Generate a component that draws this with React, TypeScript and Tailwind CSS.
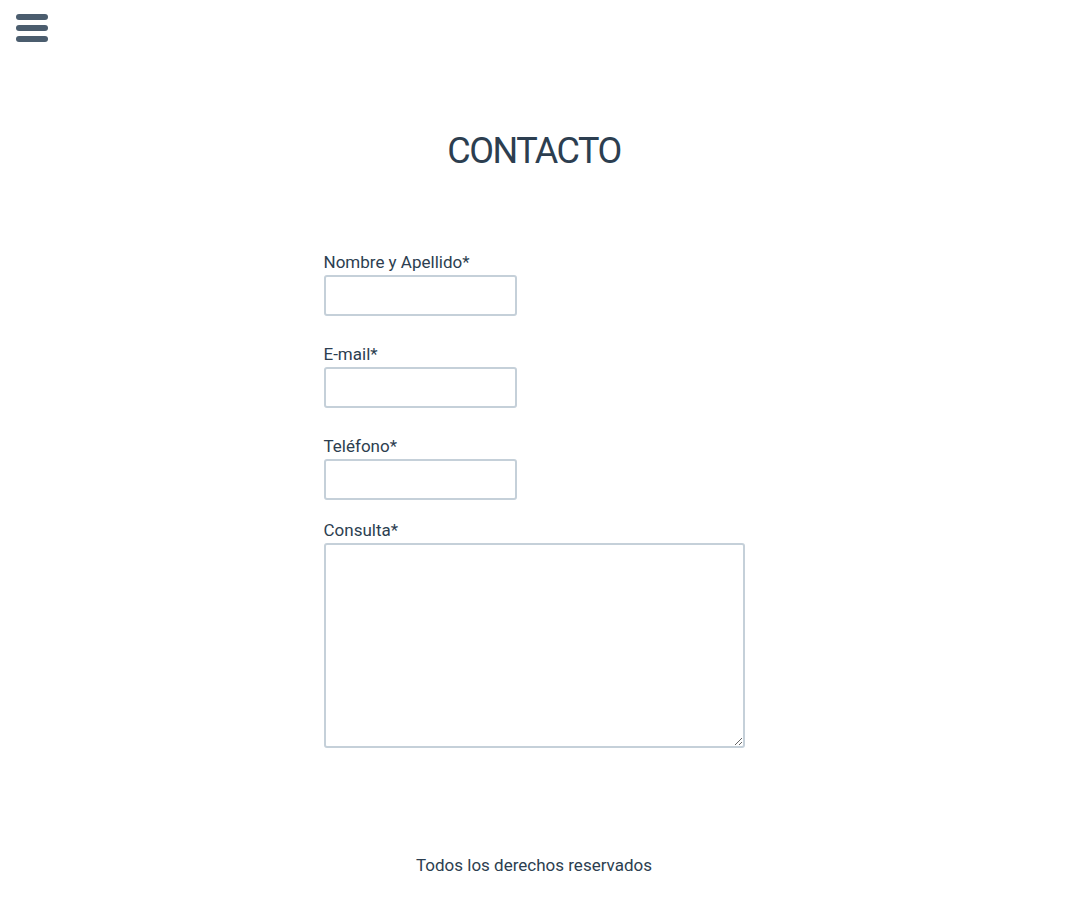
import React from 'react';

const fields = [
  { label: 'Nombre y Apellido*', name: 'nombre', type: 'text' },
  { label: 'E-mail*', name: 'email', type: 'email' },
  { label: 'Teléfono*', name: 'telefono', type: 'tel' },
];

const App: React.FC = () => {
  return (
    <div className="min-h-screen bg-white text-[#2c3e50] font-['Roboto',sans-serif]">
      <header className="pt-[14px] pl-4">
        <button type="button" aria-label="Menú" className="flex w-8 flex-col gap-[5px]">
          <span className="block h-[6px] w-8 rounded-[3px] bg-[#4b5d6e]"></span>
          <span className="block h-[6px] w-8 rounded-[3px] bg-[#4b5d6e]"></span>
          <span className="block h-[6px] w-8 rounded-[3px] bg-[#4b5d6e]"></span>
        </button>
      </header>

      <main className="flex flex-col items-center">
        <h1 className="mt-[87px] text-[36px] leading-[44px] tracking-[-1.5px]">CONTACTO</h1>

        <form className="mt-[77px] flex w-[421px] flex-col">
          {fields.map((f) => (
            <div key={f.name} className="mb-[26px] flex flex-col">
              <label htmlFor={f.name} className="text-[17px] leading-[25px]">
                {f.label}
              </label>
              <input
                id={f.name}
                name={f.name}
                type={f.type}
                className="h-[41px] w-[193px] rounded-[3px] border-2 border-[#c5d0d9] px-2 outline-none"
              />
            </div>
          ))}
          <div className="-mt-[8px] flex flex-col">
            <label htmlFor="consulta" className="text-[17px] leading-[25px]">
              Consulta*
            </label>
            <textarea
              id="consulta"
              name="consulta"
              className="h-[205px] w-[421px] rounded-[3px] border-2 border-[#c5d0d9] p-2 outline-none"
            ></textarea>
          </div>
        </form>
      </main>

      <footer className="mt-[105px] pb-[24px] text-center text-[17px] leading-[24px]">
        Todos los derechos reservados
      </footer>
    </div>
  );
};

export default App;
